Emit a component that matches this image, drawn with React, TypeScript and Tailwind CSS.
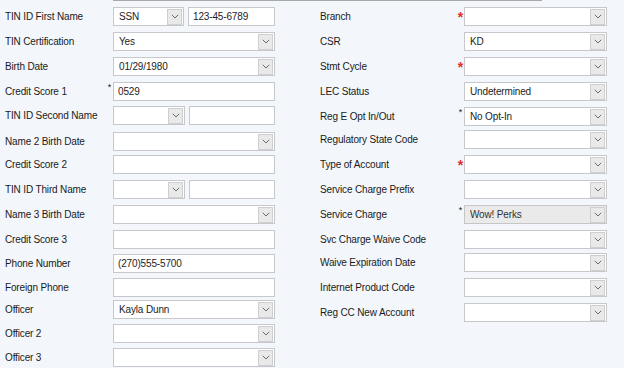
import React from "react";

const font = { fontFamily: '"Liberation Sans", Arial, sans-serif' };

function Chevron() {
  return (
    <svg width="8" height="5" viewBox="0 0 8 5" className="block">
      <polyline points="0.8,0.8 4,4 7.2,0.8" fill="none" stroke="#6b6b6b" strokeWidth="1" />
    </svg>
  );
}

function Combo({ value = "", cls = "w-full", gray = false }: { value?: string; cls?: string; gray?: boolean }) {
  return (
    <div
      className={`${cls} flex h-[19px] items-center border ${
        gray ? "border-[#c6c6c6] bg-[#eaeaea] text-[#333]" : "border-[#c6c8cc] bg-white text-[#1d1d1d]"
      } pl-[5px] pr-px`}
    >
      <span className="flex-1 truncate leading-none">{value}</span>
      <div className="flex h-[16px] w-[15px] items-center justify-center border border-[#cfcfcf] bg-[#e9e9e9]">
        <Chevron />
      </div>
    </div>
  );
}

function TextBox({ value = "", cls = "w-full" }: { value?: string; cls?: string }) {
  return (
    <div className={`${cls} flex h-[19px] items-center border border-[#c6c8cc] bg-white pl-[4px] text-[#1d1d1d]`}>
      <span className="leading-none">{value}</span>
    </div>
  );
}

type Star = "none" | "black" | "red";

function Row({
  label,
  star = "none",
  h,
  labelW,
  children,
}: {
  label: string;
  star?: Star;
  h: string;
  labelW: string;
  children: React.ReactNode;
}) {
  return (
    <div className={`${h} flex items-start`}>
      <div className={`${labelW} flex h-[19px] items-center`}>
        <span className="flex-1 leading-none text-[#1a1a1a]">{label}</span>
        {star === "black" && <span className="mr-[2px] self-start pt-[1px] text-[9px] leading-none text-[#222]">*</span>}
        {star === "red" && (
          <span className="mr-[1px] self-start pt-[3px] text-[14px] font-bold leading-none text-[#e0302a]">*</span>
        )}
      </div>
      <div className="flex flex-1 gap-[4px]">{children}</div>
    </div>
  );
}

export default function App() {
  const L = "w-[108px]";
  const R = "w-[144px]";
  return (
    <div
      className="h-[368px] w-[624px] overflow-hidden bg-[#f3f7fb] text-[10px] tracking-[-0.15px]"
      style={font}
    >
      <div className="ml-[113px] h-px w-[429px] bg-[#a9a9a9]" />
      <div className="flex pt-[6px]">
        {/* Left column */}
        <div className="ml-[5px] flex w-[270px] flex-col">
          <Row label="TIN ID First Name" h="h-[25px]" labelW={L}>
            <Combo value="SSN" cls="w-[71px]" />
            <TextBox value="123-45-6789" cls="w-[87px]" />
          </Row>
          <Row label="TIN Certification" h="h-[25px]" labelW={L}>
            <Combo value="Yes" cls="w-[162px]" />
          </Row>
          <Row label="Birth Date" h="h-[25px]" labelW={L}>
            <Combo value="01/29/1980" cls="w-[162px]" />
          </Row>
          <Row label="Credit Score 1" star="black" h="h-[24px]" labelW={L}>
            <TextBox value="0529" cls="w-[162px]" />
          </Row>
          <Row label="TIN ID Second Name" h="h-[26px]" labelW={L}>
            <Combo cls="w-[72px]" />
            <TextBox cls="w-[86px]" />
          </Row>
          <Row label="Name 2 Birth Date" h="h-[23px]" labelW={L}>
            <Combo cls="w-[162px]" />
          </Row>
          <Row label="Credit Score 2" h="h-[25px]" labelW={L}>
            <TextBox cls="w-[162px]" />
          </Row>
          <Row label="TIN ID Third Name" h="h-[25px]" labelW={L}>
            <Combo cls="w-[72px]" />
            <TextBox cls="w-[86px]" />
          </Row>
          <Row label="Name 3 Birth Date" h="h-[25px]" labelW={L}>
            <Combo cls="w-[162px]" />
          </Row>
          <Row label="Credit Score 3" h="h-[24px]" labelW={L}>
            <TextBox cls="w-[162px]" />
          </Row>
          <Row label="Phone Number" h="h-[24px]" labelW={L}>
            <TextBox value="(270)555-5700" cls="w-[162px]" />
          </Row>
          <Row label="Foreign Phone" h="h-[22px]" labelW={L}>
            <TextBox cls="w-[162px]" />
          </Row>
          <Row label="Officer" h="h-[24px]" labelW={L}>
            <Combo value="Kayla Dunn" cls="w-[162px]" />
          </Row>
          <Row label="Officer 2" h="h-[24px]" labelW={L}>
            <Combo cls="w-[162px]" />
          </Row>
          <Row label="Officer 3" h="h-[20px]" labelW={L}>
            <Combo cls="w-[162px]" />
          </Row>
        </div>

        {/* Right column */}
        <div className="ml-[45px] flex w-[300px] flex-col">
          <Row label="Branch" star="red" h="h-[25px]" labelW={R}>
            <Combo cls="w-[143px]" />
          </Row>
          <Row label="CSR" h="h-[25px]" labelW={R}>
            <Combo value="KD" cls="w-[143px]" />
          </Row>
          <Row label="Stmt Cycle" star="red" h="h-[25px]" labelW={R}>
            <Combo cls="w-[143px]" />
          </Row>
          <Row label="LEC Status" h="h-[25px]" labelW={R}>
            <Combo value="Undetermined" cls="w-[143px]" />
          </Row>
          <Row label="Reg E Opt In/Out" star="black" h="h-[23px]" labelW={R}>
            <Combo value="No Opt-In" cls="w-[143px]" />
          </Row>
          <Row label="Regulatory State Code" h="h-[25px]" labelW={R}>
            <Combo cls="w-[143px]" />
          </Row>
          <Row label="Type of Account" star="red" h="h-[25px]" labelW={R}>
            <Combo cls="w-[143px]" />
          </Row>
          <Row label="Service Charge Prefix" h="h-[25px]" labelW={R}>
            <Combo cls="w-[143px]" />
          </Row>
          <Row label="Service Charge" star="black" h="h-[25px]" labelW={R}>
            <Combo value="Wow! Perks" cls="w-[143px]" gray />
          </Row>
          <Row label="Svc Charge Waive Code" h="h-[23px]" labelW={R}>
            <Combo cls="w-[143px]" />
          </Row>
          <Row label="Waive Expiration Date" h="h-[25px]" labelW={R}>
            <Combo cls="w-[143px]" />
          </Row>
          <Row label="Internet Product Code" h="h-[25px]" labelW={R}>
            <Combo cls="w-[143px]" />
          </Row>
          <Row label="Reg CC New Account" h="h-[25px]" labelW={R}>
            <Combo cls="w-[143px]" />
          </Row>
        </div>
      </div>
    </div>
  );
}
